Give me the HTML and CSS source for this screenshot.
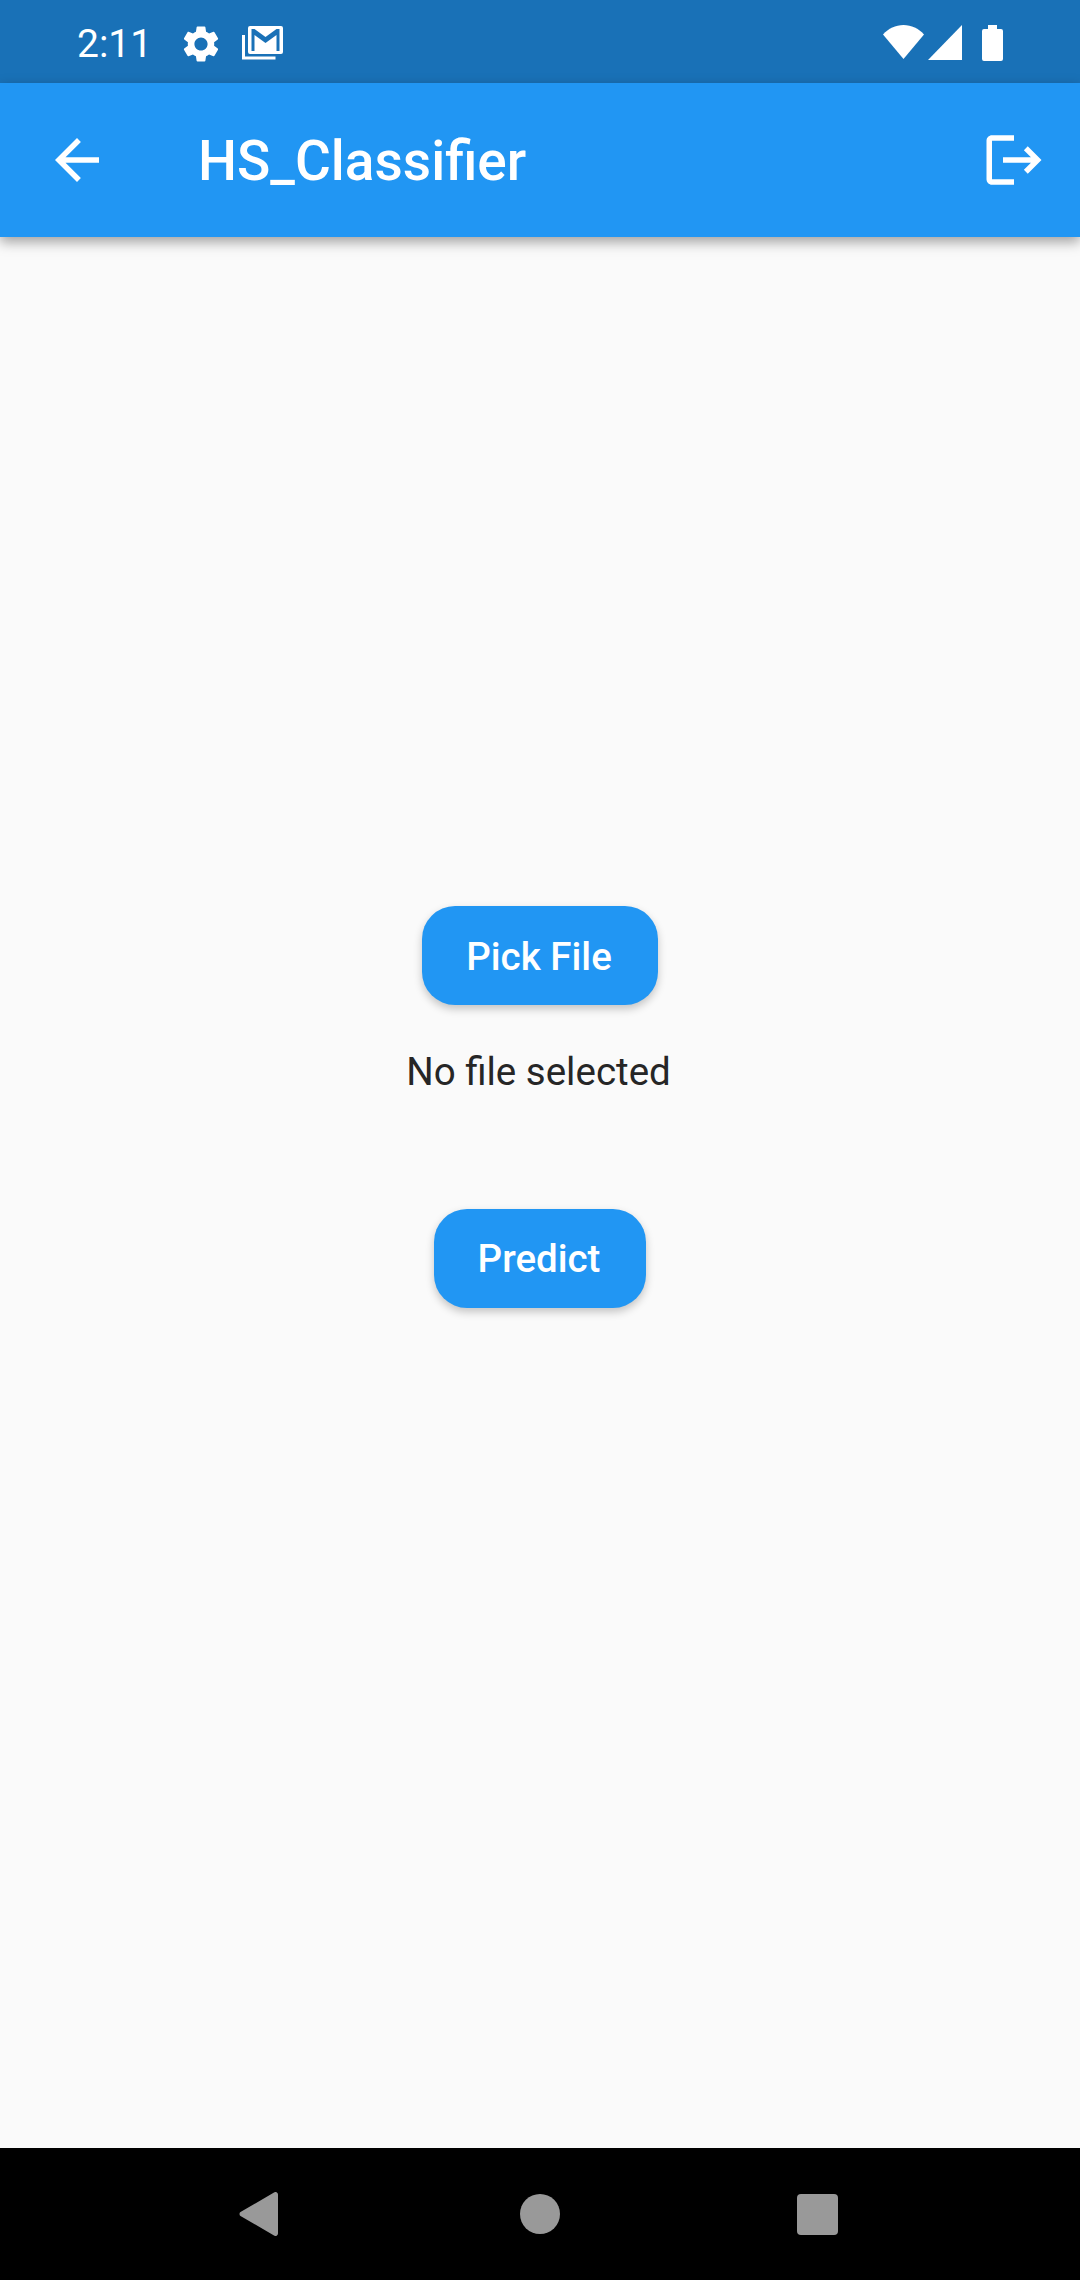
FILE: index.html
```html
<!DOCTYPE html>
<html lang="en">
<head>
<meta charset="utf-8">
<title>HS_Classifier</title>
<link rel="stylesheet" href="styles.css">
</head>
<body>
<div class="screen">
  <header class="status-bar">
    <div class="status-left">
      <span class="time">2:11</span>
      <svg class="ic-gear" viewBox="0 0 24 24"><path fill="#fff" d="M19.14 12.94c.04-.3.06-.61.06-.94 0-.32-.02-.64-.07-.94l2.03-1.58a.49.49 0 0 0 .12-.61l-1.92-3.32a.488.488 0 0 0-.59-.22l-2.39.96c-.5-.38-1.03-.7-1.62-.94l-.36-2.54a.484.484 0 0 0-.48-.41h-3.84c-.24 0-.43.17-.47.41l-.36 2.54c-.59.24-1.13.57-1.62.94l-2.39-.96c-.22-.08-.47 0-.59.22L2.74 8.87c-.12.21-.08.47.12.61l2.03 1.58c-.05.3-.09.63-.09.94s.02.64.07.94l-2.03 1.58a.49.49 0 0 0-.12.61l1.92 3.32c.12.22.37.29.59.22l2.39-.96c.5.38 1.03.7 1.62.94l.36 2.54c.05.24.24.41.48.41h3.84c.24 0 .44-.17.47-.41l.36-2.54c.59-.24 1.13-.56 1.62-.94l2.39.96c.22.08.47 0 .59-.22l1.92-3.32c.12-.22.07-.47-.12-.61l-2.01-1.58zM12 15.6c-1.98 0-3.6-1.62-3.6-3.6s1.62-3.6 3.6-3.6 3.6 1.62 3.6 3.6-1.62 3.6-3.6 3.6z"/></svg>
      <svg class="ic-mail" viewBox="0 0 41 34">
        <path fill="none" stroke="#fff" stroke-width="3" d="M1.500 9v23h32"/>
        <path fill="#fff" fill-rule="evenodd" d="M6 2a2 2 0 0 1 2-2h31a2 2 0 0 1 2 2v24a2 2 0 0 1-2 2H8a2 2 0 0 1-2-2zM9.500 3v22h3V9l11 8 11-8v16h3V3h-3l-11 8-11-8z"/>
      </svg>
    </div>
    <div class="status-right">
      <svg class="ic-wifi" viewBox="0 0 41 34"><path fill="#fff" d="M0 9.500C5.500 3.500 12.500 0 20.500 0S35.500 3.500 41 9.500L20.500 34z"/></svg>
      <svg class="ic-signal" viewBox="0 0 34 35"><path fill="#fff" d="M34 0v35H0z"/></svg>
      <svg class="ic-battery" viewBox="0 0 21 36"><path fill="#fff" d="M6 0h9v4h4a2 2 0 0 1 2 2v28a2 2 0 0 1-2 2H2a2 2 0 0 1-2-2V6a2 2 0 0 1 2-2h4z"/></svg>
    </div>
  </header>
  <nav class="app-bar">
    <svg class="ic-bar ic-back" viewBox="0 0 24 24"><path fill="#fff" d="M20 11H7.830l5.590-5.590L12 4l-8 8 8 8 1.410-1.410L7.830 13H20v-2z"/></svg>
    <h1 class="title">HS_Classifier</h1>
    <svg class="ic-bar" viewBox="0 0 24 24"><path fill="#fff" d="M17 7l-1.410 1.410L18.170 11H8v2h10.170l-2.580 2.580L17 17l5-5zM4 5h8V3H4c-1.100 0-2 .9-2 2v14c0 1.100.9 2 2 2h8v-2H4V5z"/></svg>
  </nav>
  <main class="content">
    <button class="btn btn-pick">Pick File</button>
    <p class="file-label">No file selected</p>
    <button class="btn">Predict</button>
  </main>
  <footer class="nav-bar">
    <svg class="nav-back" viewBox="0 0 40 44"><path fill="#999" d="M35 0.500a2.500 2.500 0 0 1 4 2v39a2.500 2.500 0 0 1-4 2L1.500 24a2.500 2.500 0 0 1 0-4z"/></svg>
    <span class="nav-home"></span>
    <span class="nav-recent"></span>
  </footer>
</div>
</body>
</html>
```

FILE: styles.css
```css
* { box-sizing: border-box; }
html, body { margin: 0; padding: 0; }
body { font-family: Roboto, "Noto Sans", sans-serif; }
.screen {
  width: 1080px;
  height: 2280px;
  display: flex;
  flex-direction: column;
  background: #fafafa;
  overflow: hidden;
}
.status-bar {
  height: 83px;
  flex: none;
  background: #1971b7;
  color: #fff;
  display: flex;
  align-items: center;
  justify-content: space-between;
  padding: 0 77px 0 77px;
}
.status-left { display: flex; align-items: center; }
.status-right { display: flex; align-items: center; }
.time { font-size: 39px; line-height: 44px; width: 102px; margin-top: 5px; }
.ic-gear { width: 44px; height: 44px; margin-top: 4px; margin-right: 19px; }
.ic-mail { width: 41px; height: 34px; margin-top: 3px; }
.ic-wifi { width: 41px; height: 34px; margin-top: 1px; margin-right: 4px; }
.ic-signal { width: 34px; height: 35px; margin-top: 2px; margin-right: 20px; }
.ic-battery { width: 21px; height: 36px; margin-top: 3px; }
.app-bar {
  height: 154px;
  flex: none;
  background: #2196f3;
  display: flex;
  align-items: center;
  padding: 0 33px 0 44px;
  box-shadow: 0 5px 12px rgba(0, 0, 0, 0.36);
  position: relative;
}
.ic-bar { width: 66px; height: 66px; flex: none; }
.ic-back { margin-right: 88px; }
.title {
  flex: 1;
  margin: 2px 0 0;
  color: #fff;
  font-size: 55px;
  font-weight: 500;
  line-height: 66px;
}
.content {
  flex: 1;
  display: flex;
  flex-direction: column;
  align-items: center;
  padding-top: 669px;
}
.btn {
  height: 99px;
  padding: 0 46px 0 44px;
  border: 0;
  border-radius: 33px;
  background: #2196f3;
  color: #fff;
  font-family: inherit;
  font-size: 38.500px;
  font-weight: 500;
  box-shadow: 0 4px 8px rgba(0, 0, 0, 0.22);
}
.btn-pick { padding-top: 1px; }
.file-label {
  margin: 35px 3px 106px 0;
  height: 63px;
  line-height: 63px;
  font-size: 38.500px;
  color: #262626;
}
.nav-bar {
  height: 132px;
  flex: none;
  background: #000;
  display: flex;
  align-items: center;
  padding-left: 239px;
}
.nav-back { width: 40px; height: 44px; }
.nav-home { width: 40px; height: 40px; margin-left: 241px; border-radius: 50%; background: #999; }
.nav-recent { width: 41px; height: 41px; margin-left: 237px; border-radius: 4px; background: #999; }
```
